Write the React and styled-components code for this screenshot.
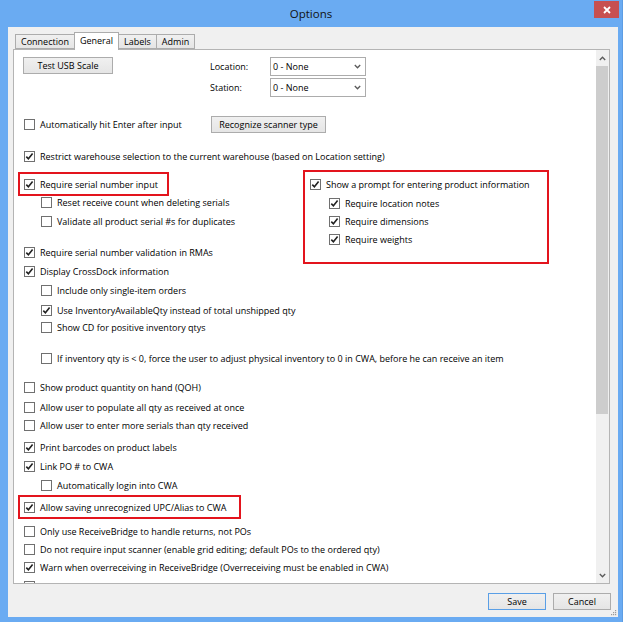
import React from 'react'
import styled, { createGlobalStyle } from 'styled-components'

const GlobalStyle = createGlobalStyle`
  html, body {
    margin: 0;
    padding: 0;
  }
  body {
    background: #6aabf2;
    font-family: "Open Sans", "Noto Sans", sans-serif;
    color: #000;
  }
`

const red = '#e3141d'

function CheckMark() {
    return (
        <svg width="9" height="9" viewBox="0 0 9 9">
            <path d="M1.3 4.6 L3.4 6.8 L7.6 1.6" fill="none" stroke="#222" strokeWidth="1.6" />
        </svg>
    )
}

function Chevron({ up }) {
    return (
        <svg width="7" height="5" viewBox="0 0 7 5">
            <path d={up ? 'M0.8 4 L3.5 1.2 L6.2 4' : 'M0.8 1 L3.5 3.8 L6.2 1'} fill="none" stroke="#5a5a5a" strokeWidth="1.3" />
        </svg>
    )
}

function CheckItem({ checked, children, width }) {
    return (
        <Item $w={width}>
            <Box>{checked && <CheckMark />}</Box>
            {children && <Label>{children}</Label>}
        </Item>
    )
}

function Combo({ value }) {
    return (
        <ComboBox>
            <span>{value}</span>
            <Chevron />
        </ComboBox>
    )
}

const leftRows = [
    { text: 'Require serial number input', checked: true, highlight: true, mt: 0 },
    { text: 'Reset receive count when deleting serials', indent: 17, mt: 0 },
    { text: 'Validate all product serial #s for duplicates', indent: 17, mt: 1 },
    { text: 'Require serial number validation in RMAs', checked: true, mt: 13 },
    { text: 'Display CrossDock information', checked: true, mt: 1 },
]

const promptRows = [
    { text: 'Require location notes', mt: 1 },
    { text: 'Require dimensions', mt: 0 },
    { text: 'Require weights', mt: 0 },
]

const lowerRows = [
    { text: 'Include only single-item orders', indent: 17, mt: 1 },
    { text: 'Use InventoryAvailableQty instead of total unshipped qty', indent: 17, checked: true, mt: 2 },
    { text: 'Show CD for positive inventory qtys', indent: 17, mt: -1 },
    { text: 'If inventory qty is < 0, force the user to adjust physical inventory to 0 in CWA, before he can receive an item', indent: 17, mt: 13 },
    { text: 'Show product quantity on hand (QOH)', mt: 11 },
    { text: 'Allow user to populate all qty as received at once', mt: 2 },
    { text: 'Allow user to enter more serials than qty received', mt: 0 },
    { text: 'Print barcodes on product labels', checked: true, mt: 4 },
    { text: 'Link PO # to CWA', checked: true, mt: 1 },
    { text: 'Automatically login into CWA', indent: 17, mt: 1 },
    { text: 'Allow saving unrecognized UPC/Alias to CWA', checked: true, highlight: true, width: 223, mt: 4 },
    { text: 'Only use ReceiveBridge to handle returns, not POs', mt: 6 },
    { text: 'Do not require input scanner (enable grid editing; default POs to the ordered qty)', mt: 0 },
    { text: 'Warn when overreceiving in ReceiveBridge (Overreceiving must be enabled in CWA)', checked: true, mt: 0 },
    { text: '', mt: 1 },
]

function OptionRow({ row }) {
    const item = <CheckItem checked={row.checked}>{row.text}</CheckItem>
    return (
        <Row $mt={row.mt} $indent={row.indent}>
            {row.highlight ? <Highlight $w={row.width || 151}>{item}</Highlight> : item}
        </Row>
    )
}

function App() {
    return (
        <>
            <GlobalStyle />
            <Window>
                <TitleBar>
                    <Title>Options</Title>
                    <CloseButton>
                        <svg width="8" height="8" viewBox="0 0 8 8">
                            <path d="M1 1 L7 7 M7 1 L1 7" stroke="#fff" strokeWidth="1.8" />
                        </svg>
                    </CloseButton>
                </TitleBar>
                <Client>
                    <TabStrip>
                        <Tab>Connection</Tab>
                        <Tab $active>General</Tab>
                        <Tab>Labels</Tab>
                        <Tab>Admin</Tab>
                    </TabStrip>
                    <Panel>
                        <Content>
                            <TopGrid>
                                <Button $w={90}>Test USB Scale</Button>
                                <FieldLabel>Location:</FieldLabel>
                                <Combo value="0 - None" />
                                <span />
                                <FieldLabel>Station:</FieldLabel>
                                <Combo value="0 - None" />
                            </TopGrid>
                            <Row $mt={18}>
                                <CheckItem width={187}>Automatically hit Enter after input</CheckItem>
                                <Button $w={115}>Recognize scanner type</Button>
                            </Row>
                            <Row $mt={14}>
                                <CheckItem checked>Restrict warehouse selection to the current warehouse (based on Location setting)</CheckItem>
                            </Row>
                            <Split>
                                <LeftColumn>
                                    {leftRows.map((r, i) => <OptionRow key={i} row={r} />)}
                                </LeftColumn>
                                <GroupBox>
                                    <Row>
                                        <CheckItem checked>Show a prompt for entering product information</CheckItem>
                                    </Row>
                                    {promptRows.map((r, i) => (
                                        <Row key={i} $mt={r.mt} $indent={19}>
                                            <CheckItem checked>{r.text}</CheckItem>
                                        </Row>
                                    ))}
                                </GroupBox>
                            </Split>
                            {lowerRows.map((r, i) => <OptionRow key={i} row={r} />)}
                        </Content>
                        <ScrollBar>
                            <ScrollArrow><Chevron up /></ScrollArrow>
                            <Thumb />
                            <Track />
                            <ScrollArrow><Chevron /></ScrollArrow>
                        </ScrollBar>
                    </Panel>
                    <Footer>
                        <Button $w={58} $primary>Save</Button>
                        <Button $w={58}>Cancel</Button>
                    </Footer>
                    <Grip>
                        <svg width="6" height="6" viewBox="0 0 6 6">
                            <rect x="4" y="0" width="1.2" height="1.2" fill="#9a9a9a" />
                            <rect x="2" y="2" width="1.2" height="1.2" fill="#9a9a9a" />
                            <rect x="4" y="2" width="1.2" height="1.2" fill="#9a9a9a" />
                            <rect x="0" y="4" width="1.2" height="1.2" fill="#9a9a9a" />
                            <rect x="2" y="4" width="1.2" height="1.2" fill="#9a9a9a" />
                            <rect x="4" y="4" width="1.2" height="1.2" fill="#9a9a9a" />
                        </svg>
                    </Grip>
                </Client>
            </Window>
        </>
    )
}

export default App

const Window = styled.div`
    width: 623px;
    height: 622px;
    background: #6aabf2;
    display: flex;
    flex-direction: column;
    box-sizing: border-box;
    border-right: 1px solid #5d9de3;
`

const TitleBar = styled.div`
    height: 27px;
    display: grid;
    grid-template-columns: 1fr auto 1fr;
    align-items: start;
`

const Title = styled.div`
    grid-column: 2;
    font-size: 11.5px;
    line-height: 27px;
    color: #111;
`

const CloseButton = styled.div`
    justify-self: end;
    margin: 1px 3px 0 0;
    width: 25px;
    height: 17px;
    background: #c75050;
    display: flex;
    align-items: center;
    justify-content: center;
`

const Client = styled.div`
    position: relative;
    flex: 1;
    margin: 0 4px 5px 8px;
    padding: 0 8px 0 5px;
    background: #f0f0f0;
    display: flex;
    flex-direction: column;
`

const TabStrip = styled.div`
    display: flex;
    align-items: flex-end;
    height: 17px;
    margin-top: 5px;
    padding-left: 2px;
    position: relative;
    z-index: 1;
`

const Tab = styled.div`
    box-sizing: border-box;
    height: ${p => (p.$active ? 18 : 15)}px;
    margin-bottom: ${p => (p.$active ? -1 : 0)}px;
    padding: 0 5px ${p => (p.$active ? 3 : 0)}px;
    margin-left: -1px;
    border: 1px solid #acacac;
    border-bottom: ${p => (p.$active ? 'none' : '1px solid #acacac')};
    background: ${p => (p.$active ? '#fff' : 'linear-gradient(#f0f0f0, #e5e5e5)')};
    font-size: 9px;
    display: flex;
    align-items: center;
    &:first-child {
        margin-left: 0;
    }
`

const Panel = styled.div`
    box-sizing: border-box;
    height: 535px;
    border: 1px solid #b4b4b4;
    background: #fff;
    display: flex;
`

const Content = styled.div`
    flex: 1;
    overflow: hidden;
    padding-left: 10px;
    display: flex;
    flex-direction: column;
`

const ScrollBar = styled.div`
    width: 13px;
    background: #f0f0f0;
    display: flex;
    flex-direction: column;
`

const ScrollArrow = styled.div`
    height: 16px;
    width: 12px;
    display: flex;
    align-items: center;
    justify-content: center;
`

const Thumb = styled.div`
    height: 348px;
    width: 12px;
    background: #cdcdcd;
`

const Track = styled.div`
    flex: 1;
`

const TopGrid = styled.div`
    display: grid;
    grid-template-columns: 187px 60px 96px;
    grid-template-rows: 19px 19px;
    row-gap: 2px;
    margin: 7px 0 0 -1px;
    align-items: center;
`

const FieldLabel = styled.div`
    font-size: 9px;
`

const ComboBox = styled.div`
    box-sizing: border-box;
    height: 19px;
    border: 1px solid #acacac;
    background: #fff;
    display: flex;
    align-items: center;
    justify-content: space-between;
    padding: 0 4px 0 2px;
    font-size: 9px;
`

const Button = styled.div`
    box-sizing: border-box;
    width: ${p => p.$w}px;
    height: 17px;
    align-self: start;
    border: 1px solid ${p => (p.$primary ? '#5a9fe6' : '#acacac')};
    background: linear-gradient(#f0f0f0, #e5e5e5);
    font-size: 9px;
    display: flex;
    align-items: center;
    justify-content: center;
    white-space: nowrap;
`

const Row = styled.div`
    display: flex;
    align-items: center;
    height: 18px;
    flex-shrink: 0;
    margin-top: ${p => p.$mt || 0}px;
    padding-left: ${p => p.$indent || 0}px;
    ${Button} {
        align-self: center;
    }
`

const Item = styled.div`
    display: flex;
    align-items: center;
    width: ${p => (p.$w ? `${p.$w}px` : 'auto')};
    flex-shrink: 0;
`

const Box = styled.div`
    box-sizing: border-box;
    width: 11px;
    height: 11px;
    border: 1px solid #707070;
    background: #fff;
    display: flex;
    align-items: center;
    justify-content: center;
`

const Label = styled.span`
    margin-left: 5px;
    font-size: 9px;
    white-space: nowrap;
`

const Highlight = styled.div`
    box-sizing: border-box;
    width: ${p => p.$w}px;
    height: 24px;
    margin-left: -6px;
    padding-left: 4px;
    border: 2px solid ${red};
    display: flex;
    align-items: center;
    flex-shrink: 0;
`

const Split = styled.div`
    display: flex;
    align-items: flex-start;
    margin-top: 5px;
`

const LeftColumn = styled.div`
    width: 279px;
    flex-shrink: 0;
    padding-top: 5px;
    display: flex;
    flex-direction: column;
`

const GroupBox = styled.div`
    box-sizing: border-box;
    width: 246px;
    border: 2px solid ${red};
    padding: 3px 0 14px 5px;
    display: flex;
    flex-direction: column;
`

const Footer = styled.div`
    display: flex;
    justify-content: flex-end;
    gap: 7px;
    margin: 9px -1px 0 0;
`

const Grip = styled.div`
    position: absolute;
    right: 1px;
    bottom: 1px;
    width: 6px;
    height: 6px;
    display: flex;
`
